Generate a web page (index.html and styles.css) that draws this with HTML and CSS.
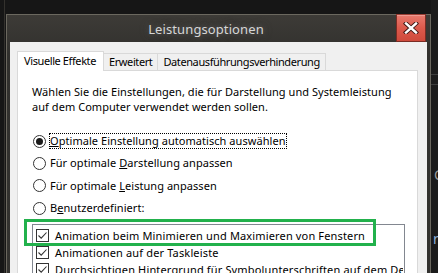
FILE: index.html
```html
<!DOCTYPE html>
<html lang="de">
<head>
<meta charset="utf-8">
<title>Leistungsoptionen</title>
<link rel="stylesheet" href="styles.css">
</head>
<body>
<div class="desk">
  <div class="edge-left"><div class="edge-line"></div></div>
  <div class="window">
    <div class="titlebar">
      <div class="title">Leistungsoptionen</div>
      <div class="close">
        <svg width="16" height="12" viewBox="0 0 16 12"><path d="M3 1.5 L13 10.5 M13 1.5 L3 10.5" stroke="#3a1512" stroke-width="4.2" stroke-linecap="square"/><path d="M3 1.5 L13 10.5 M13 1.5 L3 10.5" stroke="#ffffff" stroke-width="2.4" stroke-linecap="square"/></svg>
      </div>
    </div>
    <div class="client">
      <div class="tabs">
        <div class="tab active">Visuelle Effekte</div>
        <div class="tab">Erweitert</div>
        <div class="tab">Datenausführungsverhinderung</div>
      </div>
      <div class="panel">
        <p class="desc">Wählen Sie die Einstellungen, die für Darstellung und Systemleistung<br>auf dem Computer verwendet werden sollen.</p>
        <div class="radios">
          <div class="radio"><span class="circle checked"></span><span class="label focus"><u>O</u>ptimale Einstellung automatisch auswählen</span></div>
          <div class="radio"><span class="circle"></span><span class="label">Für optimale <u>D</u>arstellung anpassen</span></div>
          <div class="radio"><span class="circle"></span><span class="label">Für optimale <u>L</u>eistung anpassen</span></div>
          <div class="radio"><span class="circle"></span><span class="label">B<u>e</u>nutzerdefiniert:</span></div>
        </div>
        <div class="list">
          <div class="item"><span class="cb"><svg width="13" height="13" viewBox="0 0 13 13"><path d="M2.5 6.5 L5.2 9.2 L10.5 3.5" fill="none" stroke="#333" stroke-width="1.1"/></svg></span><span>Animation beim Minimieren und Maximieren von Fenstern</span></div>
          <div class="item"><span class="cb"><svg width="13" height="13" viewBox="0 0 13 13"><path d="M2.5 6.5 L5.2 9.2 L10.5 3.5" fill="none" stroke="#333" stroke-width="1.1"/></svg></span><span>Animationen auf der Taskleiste</span></div>
          <div class="item"><span class="cb"><svg width="13" height="13" viewBox="0 0 13 13"><path d="M2.5 6.5 L5.2 9.2 L10.5 3.5" fill="none" stroke="#333" stroke-width="1.1"/></svg></span><span>Durchsichtigen Hintergrund für Symbolunterschriften auf dem Desktop</span></div>
          <div class="highlight"></div>
        </div>
      </div>
    </div>
  </div>
  <div class="edge-right">
    <div class="bg-lines"></div>
    <div class="bg-c">C</div>
    <div class="bg-r">r</div>
  </div>
</div>
</body>
</html>
```
FILE: styles.css
```css
html, body {
  margin: 0;
  padding: 0;
  background: #1a1a1a;
}
.desk {
  width: 438px;
  height: 273px;
  overflow: hidden;
  display: flex;
  padding-top: 14px;
  box-sizing: border-box;
  background: #161616;
  font-family: "Noto Sans", "DejaVu Sans", sans-serif;
}
.edge-left {
  width: 6px;
  flex: none;
  margin-top: -14px;
  display: flex;
  justify-content: flex-end;
  padding-right: 1px;
  box-sizing: border-box;
}
.edge-line {
  width: 1px;
  background: #33312d;
}
.window {
  width: 425px;
  flex: none;
  box-sizing: border-box;
  border: 1px solid #6b685f;
  border-bottom: none;
  padding: 0 3px;
  background: linear-gradient(#3d3b37, #31302d 40px, #33322f);
  display: flex;
  flex-direction: column;
}
.titlebar {
  height: 28px;
  display: flex;
  align-items: stretch;
}
.title {
  flex: 1;
  display: flex;
  align-items: center;
  justify-content: center;
  padding-left: 6px;
  font-size: 13px;
  letter-spacing: 0.1px;
  color: #d6d6d6;
  text-shadow: 0 0 5px #5a5a5a, 0 0 9px #4a4a4a;
}
.close {
  width: 30px;
  height: 28px;
  margin-top: -1px;
  margin-right: 1px;
  box-sizing: border-box;
  border: 1px solid #7a2c24;
  border-top-color: #9a3e34;
  background: linear-gradient(#e87a6e, #dc5a4c 50%, #cf4a3c);
  box-shadow: inset 0 1px 0 rgba(255,255,255,0.25);
  display: flex;
  align-items: center;
  justify-content: center;
}
.client {
  flex: 1;
  background: #f0f0f0;
  padding: 9px 9px 0 7px;
  font-size: 11px;
  color: #000;
}
.tabs {
  display: flex;
  align-items: flex-start;
  height: 20px;
  margin-bottom: -1px;
  position: relative;
  z-index: 1;
  letter-spacing: -0.4px;
}
.tab {
  height: 17px;
  margin-top: 2px;
  box-sizing: border-box;
  border: 1px solid #d9d9d9;
  border-bottom: none;
  border-left: none;
  padding: 0 5px;
  line-height: 16px;
  background: #f0f0f0;
}
.tab.active {
  height: 20px;
  margin-top: 0;
  border-left: 1px solid #d9d9d9;
  background: #fff;
  padding: 0 7px 0 6px;
  line-height: 18px;
}
.panel {
  background: #fff;
  border: 1px solid #d9d9d9;
  padding: 13px 0 0 14px;
  height: 220px;
}
.desc {
  margin: 0;
  line-height: 15px;
  letter-spacing: 0.05px;
}
.radios {
  margin-top: 16px;
}
.radio {
  height: 22px;
  display: flex;
  align-items: center;
  gap: 3px;
  padding-left: 1px;
}
.radio:nth-child(n+2) {
  height: 22.5px;
}
.circle {
  width: 13px;
  height: 13px;
  box-sizing: border-box;
  border: 1px solid #333;
  border-radius: 50%;
  background: #fff;
  display: flex;
  align-items: center;
  justify-content: center;
}
.circle.checked::after {
  content: "";
  width: 7px;
  height: 7px;
  border-radius: 50%;
  background: #1a1a1a;
}
.label {
  line-height: 14px;
  border: 1px dotted transparent;
  letter-spacing: 0.05px;
}
.label.focus {
  border-color: #000;
}
.list {
  margin-top: 4px;
  width: 373px;
  height: 80px;
  box-sizing: border-box;
  border: 1px solid #828790;
  padding: 2px 0 0 3px;
  position: relative;
  white-space: nowrap;
  letter-spacing: 0.15px;
}
.item {
  height: 17px;
  display: flex;
  align-items: center;
  gap: 6px;
  overflow: hidden;
  width: 367px;
}
.cb {
  width: 13px;
  height: 13px;
  flex: none;
  box-sizing: border-box;
  border: 1px solid #333;
  background: #fff;
  display: flex;
}
.cb svg {
  margin: -1px;
}
.highlight {
  position: absolute;
  left: -9px;
  top: -6px;
  width: 352px;
  height: 27px;
  box-sizing: border-box;
  border: 3px solid #22b14c;
}
.edge-right {
  flex: 1;
  margin-top: -14px;
  background: #1b1b1b;
  position: relative;
  color: #c8c8c8;
  font-size: 14px;
}
.bg-lines {
  margin-top: 74px;
  height: 9px;
  border-top: 1px solid #3c3c3c;
  border-bottom: 1px solid #3c3c3c;
}
.bg-c {
  margin-top: 80px;
  margin-left: 3px;
  color: #9a9a9a;
}
.bg-r {
  margin-top: 45px;
  margin-left: 2px;
  color: #8fb0d8;
}
```
